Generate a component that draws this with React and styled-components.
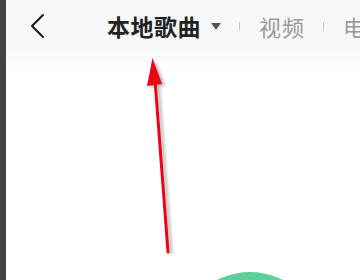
import React from 'react';
import styled, { createGlobalStyle } from 'styled-components';

const Global = createGlobalStyle`
  html, body { margin: 0; padding: 0; }
  body {
    width: 360px;
    height: 280px;
    overflow: hidden;
    font-family: "Noto Sans CJK SC", "Noto Sans", sans-serif;
    background: #ffffff;
  }
`;

function App() {
  return (
    <Screen>
      <Global />
      <Edge />
      <Page>
        <Header>
          <Back>
            <svg width="16" height="26" viewBox="0 0 16 26">
              <path d="M14 2 L3 13 L14 24" fill="none" stroke="#1a1a1a" strokeWidth="2" strokeLinecap="round" strokeLinejoin="round" />
            </svg>
          </Back>
          <Tabs>
            <Tab active>本地歌曲</Tab>
            <Caret />
            <Divider />
            <Tab>视频</Tab>
            <Divider />
            <Tab>电台</Tab>
          </Tabs>
        </Header>
        <Body>
          <Disc />
        </Body>
        <Pointer width="360" height="280" viewBox="0 0 360 280">
          <defs>
            <filter id="sh" x="-50%" y="-10%" width="200%" height="120%">
              <feGaussianBlur stdDeviation="1.6" />
            </filter>
          </defs>
          <g transform="translate(3,2)" opacity="0.35" filter="url(#sh)">
            <line x1="168" y1="252" x2="155" y2="80" stroke="#333" strokeWidth="3" />
            <polygon points="152.5,59 147,86 162,84" fill="#333" />
          </g>
          <line x1="168" y1="252" x2="155" y2="80" stroke="#f00012" strokeWidth="3" strokeLinecap="round" />
          <polygon points="152.5,58 147,86 162,84" fill="#f00012" />
        </Pointer>
      </Page>
    </Screen>
  );
}

const Screen = styled.div`
  display: flex;
  width: 360px;
  height: 280px;
  overflow: hidden;
`;

const Edge = styled.div`
  width: 6px;
  flex-shrink: 0;
  background: #434343;
`;

const Page = styled.div`
  position: relative;
  flex: 1;
  display: flex;
  flex-direction: column;
  background: #ffffff;
  overflow: hidden;
`;

const Header = styled.div`
  height: 72px;
  flex-shrink: 0;
  display: flex;
  align-items: flex-start;
  padding-top: 13px;
  box-sizing: border-box;
  background: linear-gradient(to bottom, #f8f8f8 0px, #f8f8f8 50px, #ffffff 72px);
`;

const Back = styled.div`
  width: 16px;
  height: 26px;
  margin-left: 23px;
  display: flex;
`;

const Tabs = styled.div`
  display: flex;
  align-items: center;
  margin-left: 62px;
  height: 26px;
  white-space: nowrap;
`;

const Tab = styled.span`
  font-size: ${p => (p.active ? '23px' : '22px')};
  font-weight: ${p => (p.active ? 700 : 400)};
  color: ${p => (p.active ? '#222222' : '#9a9a9a')};
  line-height: 26px;
  letter-spacing: ${p => (p.active ? '0.5px' : '1px')};
`;

const Caret = styled.span`
  width: 0;
  height: 0;
  margin-left: 10px;
  border-left: 5.5px solid transparent;
  border-right: 5.5px solid transparent;
  border-top: 7px solid #555555;
`;

const Divider = styled.span`
  width: 1px;
  height: 9px;
  background: #c8c8c8;
  margin: 0 19px 0 18px;
`;

const Body = styled.div`
  flex: 1;
  position: relative;
`;

const Disc = styled.div`
  position: absolute;
  width: 144px;
  height: 144px;
  border-radius: 50%;
  left: 172px;
  top: 200px;
  background: #5ccf9b;
`;

const Pointer = styled.svg`
  position: absolute;
  left: -6px;
  top: 0;
  pointer-events: none;
`;

export default App;
